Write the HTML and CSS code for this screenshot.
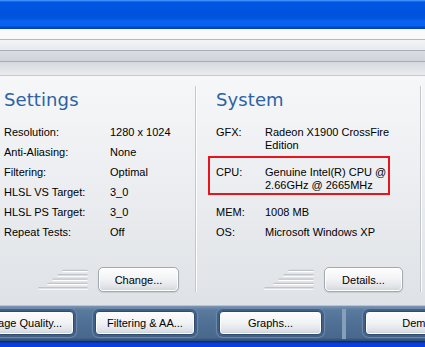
FILE: index.html
```html
<!DOCTYPE html>
<html lang="en">
<head>
  <meta charset="UTF-8">
  <title>Benchmark</title>
  <link rel="stylesheet" href="styles.css">
</head>
<body>
  <div class="titlebar"></div>
  <div class="tabs">
    <div class="tab-line t1"></div>
    <div class="tab-line t2"></div>
    <div class="tab-line t3"></div>
  </div>

  <div class="main">
    <section class="panel settings">
      <h2>Settings</h2>
      <div class="row"><span>Resolution:</span><span>1280 x 1024</span></div>
      <div class="row"><span>Anti-Aliasing:</span><span>None</span></div>
      <div class="row"><span>Filtering:</span><span>Optimal</span></div>
      <div class="row"><span>HLSL VS Target:</span><span>3_0</span></div>
      <div class="row"><span>HLSL PS Target:</span><span>3_0</span></div>
      <div class="row"><span>Repeat Tests:</span><span>Off</span></div>
      <div class="panel-foot">
        <svg class="grip" width="50" height="23" viewBox="0 0 50 23">
          <g stroke-linecap="round">
            <g stroke="#fff" stroke-width="1.4">
              <line x1="25" y1="3.6" x2="49" y2="3.6"/>
              <line x1="20" y1="8" x2="49" y2="8"/>
              <line x1="15" y1="12.3" x2="49" y2="12.3"/>
              <line x1="10" y1="16.6" x2="49" y2="16.6"/>
              <line x1="1" y1="21" x2="49" y2="21"/>
            </g>
            <g stroke="#bfc3ca" stroke-width="1.4">
              <line x1="25" y1="2.4" x2="49" y2="2.4"/>
              <line x1="20" y1="6.8" x2="49" y2="6.8"/>
              <line x1="15" y1="11.1" x2="49" y2="11.1"/>
              <line x1="10" y1="15.4" x2="49" y2="15.4"/>
              <line x1="1" y1="19.8" x2="49" y2="19.8"/>
            </g>
          </g>
        </svg>
        <button class="btn">Change...</button>
      </div>
    </section>
    <div class="vsep"></div>
    <section class="panel system">
      <h2>System</h2>
      <div class="row tall"><span>GFX:</span><span>Radeon X1900 CrossFire<br>Edition</span></div>
      <div class="row tall cpu"><span>CPU:</span><span>Genuine Intel(R) CPU @<br>2.66GHz @ 2665MHz</span><i class="mark"></i></div>
      <div class="row"><span>MEM:</span><span>1008 MB</span></div>
      <div class="row"><span>OS:</span><span>Microsoft Windows XP</span></div>
      <div class="panel-foot">
        <svg class="grip" width="50" height="23" viewBox="0 0 50 23">
          <g stroke-linecap="round">
            <g stroke="#fff" stroke-width="1.4">
              <line x1="25" y1="3.6" x2="49" y2="3.6"/>
              <line x1="20" y1="8" x2="49" y2="8"/>
              <line x1="15" y1="12.3" x2="49" y2="12.3"/>
              <line x1="10" y1="16.6" x2="49" y2="16.6"/>
              <line x1="1" y1="21" x2="49" y2="21"/>
            </g>
            <g stroke="#bfc3ca" stroke-width="1.4">
              <line x1="25" y1="2.4" x2="49" y2="2.4"/>
              <line x1="20" y1="6.8" x2="49" y2="6.8"/>
              <line x1="15" y1="11.1" x2="49" y2="11.1"/>
              <line x1="10" y1="15.4" x2="49" y2="15.4"/>
              <line x1="1" y1="19.8" x2="49" y2="19.8"/>
            </g>
          </g>
        </svg>
        <button class="btn details">Details...</button>
      </div>
    </section>
    <div class="vsep"></div>
  </div>

  <div class="toolbar">
    <button class="tbtn first">Image Quality...</button>
    <button class="tbtn filt">Filtering &amp; AA...</button>
    <button class="tbtn graphs">Graphs...</button>
    <div class="tsep"></div>
    <button class="tbtn demo">Demo...</button>
  </div>
  <div class="bottom"></div>
</body>
</html>
```

FILE: styles.css
```css
* { box-sizing: border-box; }
body { margin: 0; width: 425px; height: 347px; overflow: hidden; font-family: "Liberation Sans", Arial, sans-serif; font-size: 11px; color: #000; background: #e4e6ea; }

.titlebar { height: 29px; background: linear-gradient(#4c9dff 0, #2f7ef6 1px, #0057e4 2px, #0052dc 14px, #0054de 18px, #0a62f0 21px, #0860ee 26px, #0048d2 27px, #003ec2 29px); }

.tabs { height: 47px; padding-top: 10px; display: flex; flex-direction: column; background: linear-gradient(#fbfbfb, #f3f4f6); }
.tab-line { border-top: 1px solid #b6bac2; }
.t1 { height: 11px; background: linear-gradient(#f3f4f6, #e8eaee); }
.t2 { height: 11px; background: linear-gradient(#dadde2, #d0d4da); border-top-color: #a8acb5; }
.t3 { height: 15px; background: linear-gradient(#d6d9de, #e9ebee); border-top-color: #a8acb5; border-bottom: 1px solid #c6cad0; }

.main { height: 229px; display: flex; background: linear-gradient(#f6f7f9, #eceef1 45%, #dfe2e6); }
.panel { display: flex; flex-direction: column; }
.settings { width: 195px; padding: 0 16px 13px 4px; }
.system { width: 223px; padding: 0 17px 13px 19px; }
.vsep { width: 2px; margin: 10px 0 13px; border-left: 1px solid #c3c7cf; border-right: 1px solid #fdfdfd; }

.panel h2 { margin: 13px 0 11px; font: normal 18px/22px "DejaVu Sans", sans-serif; color: #2c62a4; letter-spacing: 0.1px; }

.row { display: grid; grid-template-columns: 106px 1fr; height: 20px; padding-top: 3.5px; line-height: 13px; position: relative; }
.system .row { grid-template-columns: 49px 1fr; }
.row.tall { height: 40px; }
.mark { position: absolute; left: -8px; top: -6px; width: 182px; height: 39px; border: 2px solid #e8141c; }

.panel-foot { margin-top: auto; display: flex; align-items: center; justify-content: flex-end; gap: 10px; }
.grip { display: block; }
.btn { width: 81px; height: 25px; padding: 0; font: 11px "Liberation Sans", Arial, sans-serif; color: #000; border: 1px solid #a3a8b1; border-radius: 5px; background: linear-gradient(#fefefe, #f3f4f6 45%, #e2e4e8 80%, #cfd3d9); box-shadow: inset 0 0 0 1px #fff, 0 1px 1px #c8ccd2; }
.details { width: 79px; }

.toolbar { height: 36px; display: flex; align-items: flex-start; padding-top: 6px; border-top: 1px solid #b8c4d2; background: linear-gradient(#7d97b5, #5a7a9e 4px, #4f6f94 50%, #48688c 90%, #2c4a70); }
.tbtn { height: 24px; width: 100px; padding: 0; flex: none; font: 11px "Liberation Sans", Arial, sans-serif; color: #000; border: 1px solid #2e4c70; border-radius: 4px; background: linear-gradient(#fdfdfe, #f0f2f5 50%, #dde1e7 85%, #c6ccd5); box-shadow: inset 0 0 0 1px #fff, 0 0 0 2px #3f5f84, 0 0 1px 3px #6d8bad; margin-top: -1px; }
.first { margin-left: -26px; }
.filt { margin-left: 21px; }
.graphs { margin-left: 24px; width: 103px; }
.tsep { width: 9px; height: 30px; margin: -3px 0 0 20px; border-left: 2px solid #86a0bc; border-right: 2px solid #86a0bc; box-shadow: inset 1px 0 0 #35557a, inset -1px 0 0 #35557a; }
.demo { margin-left: 19px; width: 113px; }

.bottom { height: 6px; background: linear-gradient(#142c7a 0, #0a2a94 1px, #0a3ed8 2px, #0840e2 6px); }
```
